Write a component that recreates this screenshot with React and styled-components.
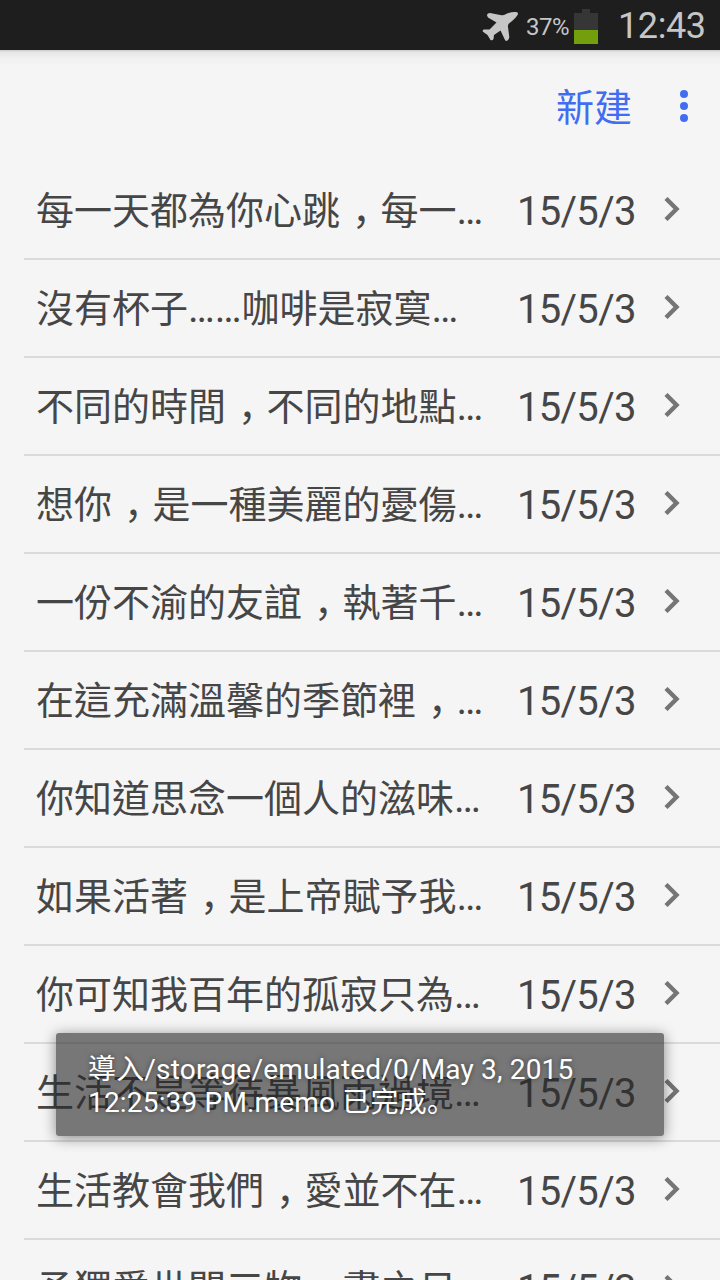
import React from "react";
import styled, { createGlobalStyle } from "styled-components";

const memos = [
  { title: "每一天都為你心跳，每一…", date: "15/5/3" },
  { title: "沒有杯子……咖啡是寂寞…", date: "15/5/3" },
  { title: "不同的時間，不同的地點…", date: "15/5/3" },
  { title: "想你，是一種美麗的憂傷…", date: "15/5/3" },
  { title: "一份不渝的友誼，執著千…", date: "15/5/3" },
  { title: "在這充滿溫馨的季節裡，…", date: "15/5/3" },
  { title: "你知道思念一個人的滋味…", date: "15/5/3" },
  { title: "如果活著，是上帝賦予我…", date: "15/5/3" },
  { title: "你可知我百年的孤寂只為…", date: "15/5/3" },
  { title: "生活不是等待暴風雨過境…", date: "15/5/3" },
  { title: "生活教會我們，愛並不在…", date: "15/5/3" },
  { title: "予獨愛世間三物。晝之日…", date: "15/5/3" }
];

// punctuation is set a little wider than the other characters
const renderTitle = title =>
  title.split(/(，|。|…+)/).map((part, index) => {
    if (part === "，") {
      return <Comma key={index}>{part}</Comma>;
    }
    if (part === "。") {
      return <Stop key={index}>{part}</Stop>;
    }
    if (part[0] === "…") {
      return <Dots key={index}>{part}</Dots>;
    }
    return part;
  });

const App = () => (
  <Screen>
    <GlobalStyle />
    <StatusBar>
      <PlaneIcon viewBox="0 0 37 31">
        <path d="M5 4.6Q5 2 8 2L19.5 4.2Q22 4.4 23.5 3.2 29 .6 34 1 37 1.2 35.5 4 33 8 27 12.5 25.6 14 26 16L27.3 26Q27.2 28 25.5 29.5 24 30.5 23 29L18.5 19.5 12 24 11.5 28Q10.5 30 8.5 29L5.5 24 1 20.8Q0 19 2 18.5L7.5 18.6 14.5 11.5 6 6.5Z" />
      </PlaneIcon>
      <Percent>37%</Percent>
      <Battery>
        <BatteryCap />
        <BatteryBody>
          <BatteryLevel />
        </BatteryBody>
      </Battery>
      <Clock>12:43</Clock>
    </StatusBar>
    <ActionBar>
      <NewButton>新建</NewButton>
      <MenuButton>
        <MenuDot />
        <MenuDot />
        <MenuDot />
      </MenuButton>
    </ActionBar>
    <List>
      {memos.map(memo => (
        <Row key={memo.title}>
          <Title>{renderTitle(memo.title)}</Title>
          <DateText>{memo.date}</DateText>
          <Chevron viewBox="0 0 16 24">
            <path d="M2 1.5 12.5 12 2 22.5" />
          </Chevron>
        </Row>
      ))}
    </List>
    <Toast>
      導入/storage/emulated/0/May 3, 2015
      <br />
      12:25:39 PM.memo 已完成。
    </Toast>
  </Screen>
);

const GlobalStyle = createGlobalStyle`
  body {
    margin: 0;
    background: #f5f5f5;
  }

  * {
    box-sizing: border-box;
  }
`;

const Screen = styled.div`
  position: relative;
  display: flex;
  flex-direction: column;
  width: 720px;
  height: 1280px;
  overflow: hidden;
  background: #f5f5f5;
  color: #464646;
  font-family: Roboto, "Noto Sans CJK TC", sans-serif;
`;

const StatusBar = styled.div`
  display: flex;
  flex: none;
  align-items: center;
  justify-content: flex-end;
  height: 50px;
  padding-right: 14px;
  background: #1e1e1e;
  color: #c6c6c6;
`;

const PlaneIcon = styled.svg`
  width: 37px;
  height: 31px;
  margin: 3px 7px 0 0;
  fill: #c6c6c6;
`;

const Percent = styled.span`
  width: 44px;
  margin-right: 4px;
  padding-top: 3px;
  font-size: 24px;
  line-height: 28px;
  letter-spacing: -0.5px;
  white-space: nowrap;
`;

const Battery = styled.div`
  display: flex;
  flex-direction: column;
  align-items: center;
  width: 24px;
  margin: 3px 20px 0 0;
`;

const BatteryCap = styled.div`
  width: 8px;
  height: 4px;
  background: #363636;
`;

const BatteryBody = styled.div`
  display: flex;
  align-items: flex-end;
  width: 24px;
  height: 31px;
  background: #363636;
`;

const BatteryLevel = styled.div`
  width: 100%;
  height: 14px;
  background: #729f0b;
`;

const Clock = styled.span`
  width: 88px;
  padding-top: 2px;
  font-size: 36px;
  line-height: 42px;
  letter-spacing: -0.4px;
  white-space: nowrap;
`;

const ActionBar = styled.div`
  display: flex;
  flex: none;
  align-items: center;
  justify-content: flex-end;
  height: 112px;
  padding: 0 32px 0 0;
  background: linear-gradient(#c8c8c8 0, #e6e6e6 2px, #f0f0f0 8px, #f5f5f5 16px);
`;

const NewButton = styled.button`
  margin: 0 48px 0 0;
  padding: 4px 0 0;
  border: 0;
  background: none;
  color: #426df2;
  font-family: inherit;
  font-size: 38px;
  line-height: 48px;
`;

const MenuButton = styled.button`
  display: flex;
  flex-direction: column;
  gap: 4px;
  padding: 0;
  border: 0;
  background: none;
`;

const MenuDot = styled.span`
  width: 8px;
  height: 8px;
  border-radius: 50%;
  background: #426df2;
`;

const List = styled.div`
  display: flex;
  flex-direction: column;
  margin-left: 24px;
`;

const Row = styled.div`
  display: flex;
  flex: none;
  align-items: center;
  height: 98px;
  padding-left: 12px;
  border-bottom: 2px solid #dadada;
`;

const Title = styled.div`
  flex: none;
  width: 481px;
  padding-top: 2px;
  font-size: 38px;
  line-height: 56px;
  white-space: nowrap;
`;

const Comma = styled.span`
  display: inline-block;
  width: 40.4px;
  padding-left: 12px;
  font-family: "Noto Sans CJK SC", sans-serif;
  line-height: 1;
  white-space: nowrap;
`;

const Stop = styled.span`
  display: inline-block;
  width: 40.4px;
  font-family: "Noto Sans CJK SC", sans-serif;
  line-height: 1;
`;

const Dots = styled.span`
  font-size: 40px;
  line-height: 1;
`;

const DateText = styled.div`
  flex: none;
  width: 147px;
  padding-top: 4px;
  font-size: 40px;
  line-height: 56px;
  letter-spacing: -0.7px;
`;

const Chevron = styled.svg`
  width: 16px;
  height: 24px;
  margin-bottom: 2px;
  fill: none;
  stroke: #757575;
  stroke-width: 4.4;
`;

const Toast = styled.div`
  position: absolute;
  top: 1033px;
  left: 56px;
  width: 608px;
  height: 103px;
  padding: 20px 32px;
  border-radius: 3px;
  background: rgba(40, 40, 40, 0.61);
  box-shadow: 0 2px 14px rgba(0, 0, 0, 0.45);
  color: #fff;
  font-family: Roboto, "Noto Sans CJK SC", sans-serif;
  font-size: 28px;
  line-height: 33px;
  letter-spacing: 0.18px;
  text-shadow: 0 0 5px rgba(0, 0, 0, 0.5);
  white-space: nowrap;
`;

export default App;
